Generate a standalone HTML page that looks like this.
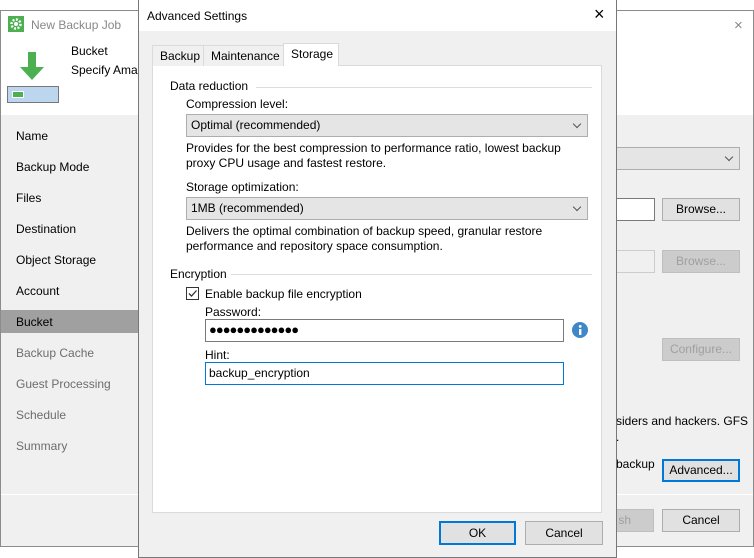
<!DOCTYPE html>
<html><head><meta charset="utf-8"><style>
*{box-sizing:border-box;margin:0;padding:0}
body{width:754px;height:558px;background:#fff;position:relative;overflow:hidden;font-family:"Liberation Sans",sans-serif;font-size:12px;color:#000}
.a{position:absolute;white-space:nowrap}
.btn{position:absolute;background:#e1e1e1;border:1px solid #adadad;text-align:center;line-height:20px}
.dis{color:#a0a0a0;background:#ccc;border-color:#bfbfbf}
.combo{position:absolute;background:#e5e5e5;border:1px solid #adadad;padding-left:4px;line-height:21px}
.combo:after{content:"";position:absolute;right:7px;top:6px;width:5px;height:5px;border-right:1px solid #555;border-bottom:1px solid #555;transform:rotate(45deg)}
.nav{position:absolute;left:16px}
</style></head><body>
<div class="a" style="left:0;top:10px;width:754px;height:537px;border:1px solid #8c8c8c;background:#f0f0f0"></div>
<div class="a" style="left:1px;top:11px;width:752px;height:104px;background:#fff"></div>
<svg class="a" style="left:8px;top:16px" width="16" height="16"><rect width="16" height="16" fill="#4caf50"/><circle cx="8" cy="8" r="4.5" fill="none" stroke="#fff" stroke-width="2.5" stroke-dasharray="2 1.5"/><circle cx="8" cy="8" r="2" fill="#fff"/></svg>
<div class="a" style="left:31px;top:18px;color:#888">New Backup Job</div>
<div class="a" style="left:734px;top:17px;color:#888;font-size:15px">×</div>
<svg class="a" style="left:17px;top:52px" width="32" height="30"><path d="M11 0h8v15h8L15 28 3 15h8z" fill="#4caf50"/></svg>
<div class="a" style="left:7px;top:86px;width:52px;height:17px;border:1px solid #777;background:#bcd6ef"></div>
<div class="a" style="left:13px;top:92px;width:10px;height:5px;background:#4caf50;border:1px solid #fff;box-sizing:content-box;margin:-1px"></div>
<div class="a" style="left:71px;top:44px">Bucket</div>
<div class="a" style="left:71px;top:63px">Specify Amazon</div>
<div class="nav a" style="top:129px">Name</div>
<div class="nav a" style="top:160px">Backup Mode</div>
<div class="nav a" style="top:191px">Files</div>
<div class="nav a" style="top:222px">Destination</div>
<div class="nav a" style="top:253px">Object Storage</div>
<div class="nav a" style="top:284px">Account</div>
<div class="a" style="left:1px;top:310px;width:137px;height:23px;background:#a0a0a0"></div>
<div class="nav a" style="top:315px">Bucket</div>
<div class="nav a" style="top:346px;color:#6d6d6d">Backup Cache</div>
<div class="nav a" style="top:377px;color:#6d6d6d">Guest Processing</div>
<div class="nav a" style="top:408px;color:#6d6d6d">Schedule</div>
<div class="nav a" style="top:439px;color:#6d6d6d">Summary</div>
<div class="a" style="left:1px;top:494px;width:752px;height:1px;background:#fff"></div>
<div class="combo" style="left:610px;top:147px;width:130px;height:23px"></div>
<div class="a" style="left:610px;top:198px;width:45px;height:23px;background:#fff;border:1px solid #7a7a7a"></div>
<div class="btn" style="left:662px;top:198px;width:78px;height:23px">Browse...</div>
<div class="a" style="left:610px;top:250px;width:45px;height:23px;background:#f0f0f0;border:1px solid #ccc"></div>
<div class="btn dis" style="left:662px;top:250px;width:78px;height:23px">Browse...</div>
<div class="btn dis" style="left:662px;top:338px;width:78px;height:23px">Configure...</div>
<div class="a" style="left:616px;top:414px">siders and hackers. GFS</div>
<div class="a" style="left:616px;top:430px">.</div>
<div class="a" style="left:616px;top:457px">backup</div>
<div class="btn" style="left:662px;top:459px;width:78px;height:23px;border:2px solid #0078d7;line-height:19px">Advanced...</div>
<div class="btn dis" style="left:600px;top:509px;width:54px;height:23px;text-align:right;padding-right:22px">sh</div>
<div class="btn" style="left:662px;top:509px;width:78px;height:23px">Cancel</div>
<div class="a" style="left:138px;top:0;width:479px;height:558px;border:1px solid #777;background:#f0f0f0"></div>
<div class="a" style="left:139px;top:0;width:477px;height:31px;background:#fff"></div>
<div class="a" style="left:147px;top:9px">Advanced Settings</div>
<div class="a" style="left:594px;top:4px;font-size:18px">×</div>
<div class="a" style="left:152px;top:65px;width:450px;height:448px;background:#fff;border:1px solid #dadada"></div>
<div class="a" style="left:152px;top:45px;width:52px;height:21px;border:1px solid #dadada;border-bottom:none;background:#f0f0f0;padding:3px 0 0 7px">Backup</div>
<div class="a" style="left:203px;top:45px;width:81px;height:21px;border:1px solid #dadada;border-bottom:none;background:#f0f0f0;padding:3px 0 0 7px">Maintenance</div>
<div class="a" style="left:283px;top:43px;width:56px;height:23px;border:1px solid #dadada;border-bottom:none;background:#fff;padding:3px 0 0 7px">Storage</div>
<div class="a" style="left:170px;top:79px">Data reduction</div>
<div class="a" style="left:256px;top:87px;width:336px;height:1px;background:#dcdcdc"></div>
<div class="a" style="left:186px;top:97px">Compression level:</div>
<div class="combo" style="left:186px;top:114px;width:402px;height:23px">Optimal (recommended)</div>
<div class="a" style="left:186px;top:141px">Provides for the best compression to performance ratio, lowest backup</div>
<div class="a" style="left:186px;top:156px">proxy CPU usage and fastest restore.</div>
<div class="a" style="left:186px;top:180px">Storage optimization:</div>
<div class="combo" style="left:186px;top:197px;width:402px;height:23px">1MB (recommended)</div>
<div class="a" style="left:186px;top:224px">Delivers the optimal combination of backup speed, granular restore</div>
<div class="a" style="left:186px;top:239px">performance and repository space consumption.</div>
<div class="a" style="left:170px;top:267px">Encryption</div>
<div class="a" style="left:231px;top:274px;width:361px;height:1px;background:#dcdcdc"></div>
<div class="a" style="left:186px;top:287px;width:13px;height:13px;border:1px solid #333;background:#fff"></div>
<svg class="a" style="left:187px;top:288px" width="11" height="11"><path d="M2 5.5l2.5 2.5L9.5 2.5" fill="none" stroke="#333" stroke-width="1.3"/></svg>
<div class="a" style="left:205px;top:287px">Enable backup file encryption</div>
<div class="a" style="left:205px;top:305px">Password:</div>
<div class="a" style="left:205px;top:319px;width:359px;height:23px;border:1px solid #7a7a7a;background:#fff;padding-left:3px;line-height:20px;font-size:13px;letter-spacing:-1px">●●●●●●●●●●●●●</div>
<svg class="a" style="left:572px;top:322px" width="16" height="16"><circle cx="8" cy="8" r="8" fill="#3f87c8"/><rect x="7" y="7" width="2.4" height="6" fill="#fff"/><circle cx="8.2" cy="4.4" r="1.4" fill="#fff"/></svg>
<div class="a" style="left:205px;top:348px">Hint:</div>
<div class="a" style="left:205px;top:362px;width:359px;height:23px;border:1px solid #0078d7;background:#fff;padding-left:3px;line-height:20px">backup_encryption</div>
<div class="btn" style="left:439px;top:521px;width:77px;height:24px;border:2px solid #0078d7;line-height:20px">OK</div>
<div class="btn" style="left:525px;top:521px;width:78px;height:24px;line-height:22px">Cancel</div>
</body></html>
